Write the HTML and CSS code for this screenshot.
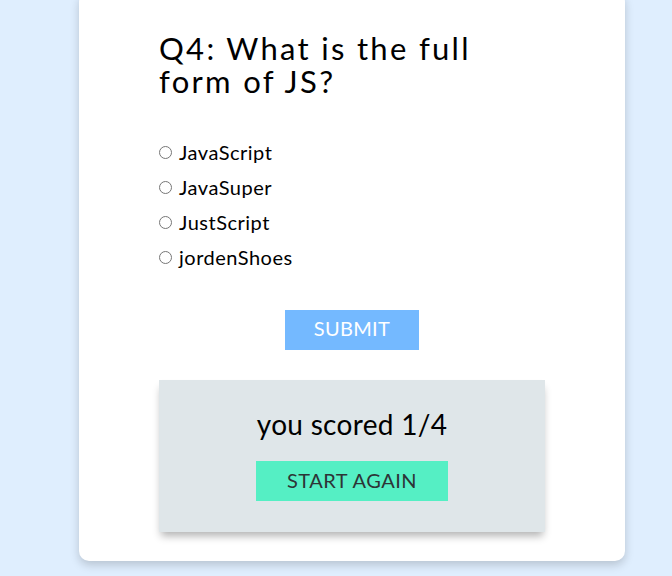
FILE: index.html
```html
<!DOCTYPE html>
<html lang="en">
<head>
<meta charset="utf-8">
<title>Quiz</title>
<link rel="stylesheet" href="styles.css">
</head>
<body>
<main class="page">
  <section class="card">
    <h2 class="question">Q4: What is the full<br>form of JS?</h2>
    <ul class="options">
      <li class="option"><input type="radio" name="answer" id="a"><label for="a">JavaScript</label></li>
      <li class="option"><input type="radio" name="answer" id="b"><label for="b">JavaSuper</label></li>
      <li class="option"><input type="radio" name="answer" id="c"><label for="c">JustScript</label></li>
      <li class="option"><input type="radio" name="answer" id="d"><label for="d">jordenShoes</label></li>
    </ul>
    <div class="actions">
      <button class="submit">SUBMIT</button>
    </div>
    <div class="score">
      <h2 class="score-text">you scored 1/4</h2>
      <button class="restart">START AGAIN</button>
    </div>
  </section>
</main>
</body>
</html>
```
FILE: styles.css
```css
* { box-sizing: border-box; }
html, body { margin: 0; padding: 0; }
body {
  background: #dfeefe;
  font-family: "Lato", "Noto Sans", sans-serif;
  color: #000;
  height: 576px;
  overflow: hidden;
}
.card {
  width: 546px;
  margin: -8px 0 0 79px;
  background: #fff;
  border-radius: 10px;
  box-shadow: 0 4px 10px rgba(0, 0, 0, 0.18);
  padding: 40px 80px 29px;
}
.question {
  margin: 0;
  font-size: 31px;
  font-weight: 400;
  line-height: 33px;
  letter-spacing: 2.3px;
}
.options {
  list-style: none;
  margin: 43px 0 0;
  padding: 0;
  display: flex;
  flex-direction: column;
  gap: 13px;
}
.option {
  display: flex;
  align-items: center;
  height: 22px;
  font-size: 20px;
  letter-spacing: 0.5px;
}
.option input {
  margin: 0 7px 0 0;
  width: 13px;
  height: 13px;
}
.actions {
  display: flex;
  justify-content: center;
  margin-top: 42px;
}
.submit {
  width: 134px;
  height: 40px;
  padding: 0 0 4px;
  border: none;
  background: #74b9ff;
  color: #fff;
  font-family: inherit;
  font-size: 20px;
  letter-spacing: 0.3px;
}
.score {
  margin-top: 30px;
  background: #dfe6e9;
  box-shadow: 0 6px 8px -2px rgba(0, 0, 0, 0.3);
  padding: 26px 0 31px;
  display: flex;
  flex-direction: column;
  align-items: center;
}
.score-text {
  margin: 0;
  font-size: 28px;
  font-weight: 400;
  line-height: 36px;
  letter-spacing: 0.3px;
}
.restart {
  margin-top: 19px;
  width: 192px;
  height: 40px;
  padding: 0 0 3px;
  border: none;
  background: #55efc4;
  color: #2d3436;
  font-family: inherit;
  font-size: 20px;
  letter-spacing: 0.5px;
}
```
